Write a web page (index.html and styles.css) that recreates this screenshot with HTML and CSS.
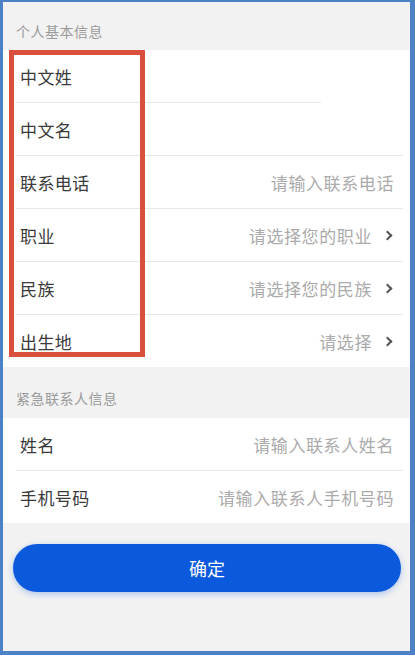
FILE: index.html
```html
<!DOCTYPE html>
<html lang="zh-CN">
<head>
    <meta charset="UTF-8">
    <meta name="viewport" content="width=device-width, initial-scale=1.0">
    <title>个人信息</title>
    <link rel="stylesheet" href="styles.css">
</head>
<body>
    <div id="frame">
        <div class="group-title first">个人基本信息</div>
        <div class="group">
            <!-- highlight box around the labels -->
            <div class="highlight"></div>
            <div class="row short"><span class="label">中文姓</span></div>
            <div class="row"><span class="label">中文名</span></div>
            <div class="row">
                <span class="label">联系电话</span>
                <span class="hint">请输入联系电话</span>
            </div>
            <div class="row arrow">
                <span class="label">职业</span>
                <span class="hint">请选择您的职业</span>
                <span class="chev"></span>
            </div>
            <div class="row arrow">
                <span class="label">民族</span>
                <span class="hint">请选择您的民族</span>
                <span class="chev"></span>
            </div>
            <div class="row arrow">
                <span class="label">出生地</span>
                <span class="hint">请选择</span>
                <span class="chev"></span>
            </div>
        </div>
        <div class="group-title">紧急联系人信息</div>
        <div class="group">
            <div class="row">
                <span class="label">姓名</span>
                <span class="hint">请输入联系人姓名</span>
            </div>
            <div class="row">
                <span class="label">手机号码</span>
                <span class="hint">请输入联系人手机号码</span>
            </div>
        </div>
        <button class="submit">确定</button>
    </div>
</body>
</html>
```

FILE: styles.css
```css
body {
    margin: 0;
    padding: 0;
    background-color: white;
    font-family: "Noto Sans CJK SC", "Noto Sans", sans-serif;
}
#frame {
    height: 655px;
    box-sizing: border-box;
    border-style: solid;
    border-color: #4d81c6;
    border-width: 2px 5px 4px 3px;
    background-color: #f2f2f2;
    overflow: hidden;
}
.group-title {
    height: 51px;
    box-sizing: border-box;
    padding: 22px 0 0 13px;
    font-size: 14px;
    line-height: 18px;
    letter-spacing: 0.5px;
    color: #9a9a9a;
}
.group-title.first {
    height: 48px;
    padding-top: 20px;
}
.group {
    position: relative;
    background-color: white;
}
.highlight {
    position: absolute;
    left: 6px;
    top: 0;
    width: 136px;
    height: 307px;
    box-sizing: border-box;
    border: 5px solid #d94f3d;
}
.row {
    display: flex;
    align-items: center;
    height: 52px;
    margin: 0 7px 0 13px;
    padding: 0 9px 0 4px;
    border-bottom: 1px solid #e8e8e8;
}
.row:last-child {
    border-bottom: none;
}
.row.short {
    margin-right: 89px;
}
.row.arrow {
    padding-right: 12px;
}
.label {
    font-size: 17px;
    letter-spacing: 0.4px;
    color: #3a3a3a;
}
.hint {
    margin-left: auto;
    font-size: 17px;
    letter-spacing: 0.6px;
    color: #ababab;
}
.chev {
    width: 5px;
    height: 5px;
    margin: 0 0 0 12px;
    border-top: 2px solid #555;
    border-right: 2px solid #555;
    transform: rotate(45deg);
}
.submit {
    display: block;
    width: 388px;
    height: 48px;
    margin: 21px 0 0 10px;
    border: none;
    border-radius: 24px;
    background-color: #0b5ade;
    color: white;
    font-family: inherit;
    font-size: 18px;
    box-shadow: 0 2px 6px rgba(11, 90, 222, 0.3);
}
```
